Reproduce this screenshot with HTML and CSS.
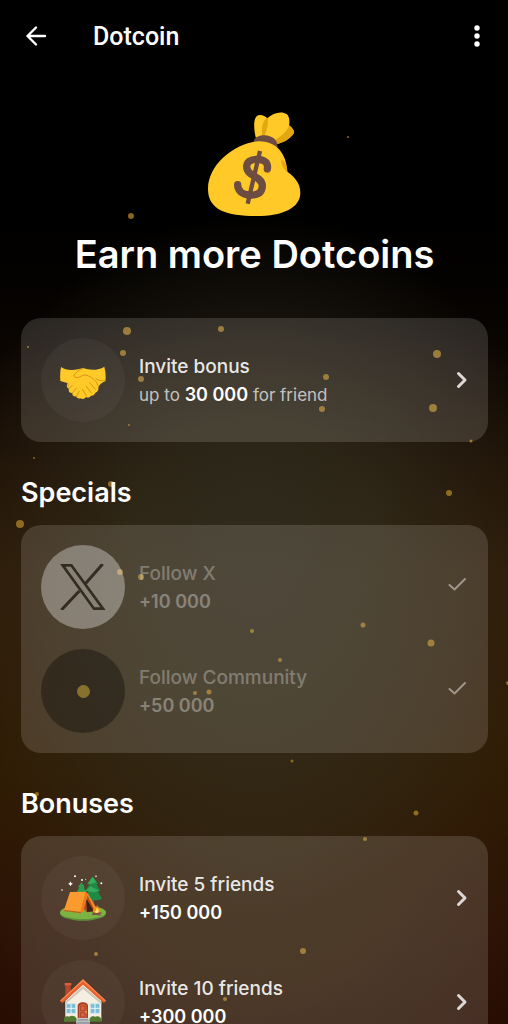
FILE: index.html
```html
<!DOCTYPE html>
<html lang="en">
<head>
    <meta charset="UTF-8">
    <meta name="viewport" content="width=device-width, initial-scale=1.0">
    <title>Dotcoin</title>
    <link rel="stylesheet" href="styles.css">
</head>
<body>
    <svg class="particles" viewBox="0 0 508 1024" preserveAspectRatio="xMidYMin slice" aria-hidden="true">
        <circle cx="348" cy="137" r="1"/>
        <circle cx="131" cy="216" r="3"/>
        <circle cx="127" cy="331" r="4"/>
        <circle cx="221" cy="329" r="3"/>
        <circle cx="28" cy="347" r="1"/>
        <circle cx="123" cy="353" r="3"/>
        <circle cx="141" cy="379" r="3"/>
        <circle cx="437" cy="354" r="4"/>
        <circle cx="326" cy="377" r="3"/>
        <circle cx="322" cy="409" r="3"/>
        <circle cx="433" cy="408" r="4"/>
        <circle cx="129" cy="425" r="1"/>
        <circle cx="471" cy="441" r="1.5"/>
        <circle cx="34" cy="458" r="1"/>
        <circle cx="111" cy="484" r="3"/>
        <circle cx="449" cy="493" r="3"/>
        <circle cx="20" cy="524" r="4"/>
        <circle cx="120" cy="572" r="3"/>
        <circle cx="141" cy="577" r="3"/>
        <circle cx="252" cy="631" r="2"/>
        <circle cx="363" cy="625" r="2.5"/>
        <circle cx="431" cy="643" r="3.5"/>
        <circle cx="280" cy="660" r="2"/>
        <circle cx="195" cy="693" r="2"/>
        <circle cx="209" cy="692" r="2.5"/>
        <circle cx="508" cy="683" r="2"/>
        <circle cx="292" cy="761" r="1.5"/>
        <circle cx="37" cy="794" r="2"/>
        <circle cx="416" cy="813" r="2.5"/>
        <circle cx="365" cy="839" r="2"/>
        <circle cx="303" cy="951" r="3"/>
        <circle cx="96" cy="954" r="2"/>
        <circle cx="225" cy="999" r="2"/>
    </svg>

    <header class="topbar">
        <button class="icon-btn" type="button" aria-label="Back">
            <svg width="24" height="24" viewBox="0 0 24 24" fill="none" stroke="#fff" stroke-width="2.4" stroke-linecap="round" stroke-linejoin="round"><path d="M21 12H3.500M12 3.500L3.500 12L12 20.500"/></svg>
        </button>
        <span class="topbar-title">Dotcoin</span>
        <button class="icon-btn" type="button" aria-label="Menu">
            <svg width="24" height="24" viewBox="0 0 24 24" fill="#fff"><circle cx="12" cy="4" r="2.700"/><circle cx="12" cy="12" r="2.700"/><circle cx="12" cy="20" r="2.700"/></svg>
        </button>
    </header>

    <main>
        <section class="hero">
            <svg class="money-bag" viewBox="54 36 279 312" aria-hidden="true">
                <path fill="#ffca28" d="M197 112C190 80 189 45 210 45C220 45 226 50 232 55C248 38 275 32 290 42C300 50 299 68 297 78C306 83 312 90 312 98C300 118 275 130 256 132Z"/>
                <path fill="#e2a610" d="M298 76C291 96 270 112 254 120L260 132C280 128 303 116 312 98C312 90 306 82 298 76Z"/>
                <path fill="#e2a610" d="M233 54C220 56 213 82 217 110L223 110C228 96 236 76 233 54Z"/>
                <path fill="#6d4c41" d="M190 126C193 108 220 101 243 110C258 116 265 130 262 144L240 138Z"/>
                <path fill="#ffca28" d="M206 124C140 128 54 190 54 267C54 330 110 348 198 348C282 348 331 322 331 278C331 247 311 229 292 215C290 178 272 124 206 124Z"/>
                <path fill="#e2a610" d="M292 216C281 207 272 192 274 179C285 182 290 196 292 216Z"/>
                <g fill="none" stroke="#6d4c41">
                    <path stroke-width="22" stroke-linecap="round" d="M232 207C235 188 224 179 203 178C182 177 171 186 170 198C169 232 217 226 217 258C217 279 200 287 177 285C156 283 143 271 143 254"/>
                    <path stroke-width="13" d="M210 153L173 311"/>
                </g>
            </svg>
            <h1>Earn more Dotcoins</h1>
        </section>

        <section class="card">
            <button class="task" type="button">
                <span class="avatar">
                    <svg viewBox="90 81 138 138" aria-hidden="true">
                        <path fill="#ffca28" d="M93 111C105 121 126 121 144 118L160 114C178 121 205 122 223 110Q229 132 226 154C216 157 210 163 205 171C207 181 201 187 196 188C194 195 188 198 183 197C179 203 173 204 168 201C164 207 158 208 151 205C145 207 139 204 139 199C132 201 126 196 127 189C119 190 114 182 117 176C109 173 109 163 113 159C104 158 98 154 91 153Q89 130 93 111Z"/>
                        <g fill="none" stroke="#d49317" stroke-width="3" stroke-linecap="round" stroke-linejoin="round">
                            <path d="M160 115C148 119 137 127 131 138C139 147 151 141 160 135C174 134 188 143 198 155L206 170"/>
                            <path d="M198 146C206 153 215 153 225 152"/>
                            <path d="M179 158L196 178M169 169L184 189M157 178L169 197"/>
                            <path d="M117 176L127 166M127 189L139 174M139 199L148 184"/>
                            <path d="M113 159C116 163 112 169 117 171"/>
                        </g>
                    </svg>
                </span>
                <span class="task-text">
                    <span class="task-title">Invite bonus</span>
                    <span class="task-note">up to <b>30 000</b> for friend</span>
                </span>
                <svg class="chevron" viewBox="0 0 12 20" aria-hidden="true"><path d="M2.500 3.500L9 10L2.500 16.500"/></svg>
            </button>
        </section>

        <h2>Specials</h2>
        <section class="card">
            <button class="task done" type="button" disabled>
                <span class="avatar avatar-x">
                    <svg viewBox="90 88 138 138" aria-hidden="true">
                        <path fill="none" stroke="#000" stroke-width="8" d="M98 92H124L219 222H192Z"/>
                        <path fill="none" stroke="#000" stroke-width="9" d="M218 88L166 147M148 169L94 226"/>
                    </svg>
                </span>
                <span class="task-text">
                    <span class="task-title">Follow X</span>
                    <b class="task-reward">+10 000</b>
                </span>
                <svg class="check" viewBox="0 0 20 20" aria-hidden="true"><path d="M1.500 8L6.500 12.500L17 2"/></svg>
            </button>
            <button class="task done" type="button" disabled>
                <span class="avatar avatar-dot"></span>
                <span class="task-text">
                    <span class="task-title">Follow Community</span>
                    <b class="task-reward">+50 000</b>
                </span>
                <svg class="check" viewBox="0 0 20 20" aria-hidden="true"><path d="M1.500 8L6.500 12.500L17 2"/></svg>
            </button>
        </section>

        <h2>Bonuses</h2>
        <section class="card">
            <button class="task" type="button">
                <span class="avatar">
                    <!-- camping tent -->
                    <svg viewBox="90 76 138 138" aria-hidden="true">
                        <ellipse cx="159" cy="192" rx="69" ry="21" fill="#5d8f3a"/>
                        <ellipse cx="159" cy="188" rx="69" ry="20" fill="#7cb342"/>
                        <path fill="#795548" d="M185 150H192V178H185Z"/>
                        <path fill="#2e9b4f" d="M154 98L165 112L161 113L170 127H140L148 113L144 112Z"/>
                        <path fill="#1f8a43" d="M188 81L205 103L199 104L211 123L204 125L216 148C205 153 180 153 166 148L174 125L167 123L178 104L172 102Z"/>
                        <path fill="#36ab5a" d="M188 81L199 98L184 103L172 102ZM181 110L208 123L190 128L167 123Z"/>
                        <path fill="#bf4b16" d="M163 127L202 183L171 188L161 178Z"/>
                        <path fill="#37251f" d="M168 145L192 185L171 187Z"/>
                        <path fill="#fb9a2e" d="M120 127L168 126L152 187L102 181Z"/>
                        <path fill="#ef7d20" d="M168 126L174 136L158 187L151 187Z"/>
                        <path fill="#f58a2a" d="M168 126L175 134L203 181L194 184Z"/>
                        <path fill="#c85a17" d="M102 181L152 187L154 191L102 184Z"/>
                        <path fill="#ff8f00" d="M201 165C204 174 212 176 211 186C208 195 192 195 189 186C188 178 194 178 194 172L198 178Z"/>
                        <path fill="#ffe57f" d="M201 173C202 180 208 181 206 187C202 192 194 190 194 184L198 183Z"/>
                        <path stroke="#795548" stroke-width="4" stroke-linecap="round" d="M188 194L213 190M189 190L210 196"/>
                        <g fill="#fff">
                            <path d="M121 95L124 100L129 102L124 105L121 110L119 105L114 102L119 100Z"/>
                            <circle cx="96" cy="121" r="2.500"/>
                            <circle cx="135" cy="80" r="3"/>
                            <circle cx="156" cy="91" r="3"/>
                            <circle cx="167" cy="89" r="1.500"/>
                            <circle cx="198" cy="80" r="2.500"/>
                            <circle cx="214" cy="101" r="3"/>
                        </g>
                    </svg>
                </span>
                <span class="task-text">
                    <span class="task-title">Invite 5 friends</span>
                    <b class="task-reward">+150 000</b>
                </span>
                <svg class="chevron" viewBox="0 0 12 20" aria-hidden="true"><path d="M2.500 3.500L9 10L2.500 16.500"/></svg>
            </button>
            <button class="task" type="button">
                <span class="avatar">
                    <!-- house -->
                    <svg viewBox="90 387 138 138" aria-hidden="true">
                        <path fill="#b6472a" d="M106 401H122V430L106 442Z"/>
                        <path fill="#d8603a" d="M104 399H124V406H104Z"/>
                        <path fill="#f5efe2" d="M159 402L214 452V512H106V452Z"/>
                        <path fill="#cfc4b2" d="M159 408L214 455V462L159 417L106 462V455Z"/>
                        <path fill="#e9602e" d="M159 388L228 452L222 459L159 404L97 459L90 452Z"/>
                        <path fill="#f98a4b" d="M159 388L228 452L225 454L159 394L93 454L90 452Z"/>
                        <g fill="#79bfd6" stroke="#dcecef" stroke-width="2">
                            <path d="M109 461H137V490H109Z"/>
                            <path d="M181 461H209V490H181Z"/>
                        </g>
                        <path stroke="#eef5f5" stroke-width="3" d="M123 461V490M109 475H137M195 461V490M181 475H209"/>
                        <path fill="#a83c24" d="M143 506V468C143 453 174 453 174 468V506Z"/>
                        <path fill="#d9643e" d="M147 504V470C147 459 170 459 170 470V504Z"/>
                        <path fill="none" stroke="#8d3b25" stroke-width="2" d="M152 482V468H165V482ZM152 501V488H165V501Z"/>
                        <circle cx="168" cy="486" r="2.500" fill="#ffca28"/>
                        <path fill="#547c30" d="M102 515C100 502 108 496 117 500C125 494 138 498 140 507V515ZM178 515C177 502 185 496 195 500C205 495 216 502 215 515Z"/>
                        <path fill="#9b9ea5" d="M143 504H175V512H180V525H138V512H143Z"/>
                        <path fill="#c3c6cc" d="M143 504H175V507H143ZM138 512H180V515H138Z"/>
                    </svg>
                </span>
                <span class="task-text">
                    <span class="task-title">Invite 10 friends</span>
                    <b class="task-reward">+300 000</b>
                </span>
                <svg class="chevron" viewBox="0 0 12 20" aria-hidden="true"><path d="M2.500 3.500L9 10L2.500 16.500"/></svg>
            </button>
        </section>
    </main>
</body>
</html>
```
FILE: styles.css
```css
* {
    box-sizing: border-box;
}

body {
    font-family: Inter, "Liberation Sans", sans-serif;
    margin: 0;
    height: 100vh;
    display: flex;
    flex-direction: column;
    overflow: hidden;
    position: relative;
    color: #fff;
    background:
        radial-gradient(ellipse 62% 34% at 50% 55%, rgba(50, 48, 36, 0.8), rgba(50, 46, 30, 0.7) 40%, rgba(50, 38, 16, 0)),
        radial-gradient(ellipse 60% 30% at 50% 82%, rgba(50, 36, 14, 0.8), rgba(50, 34, 12, 0.6) 50%, rgba(50, 30, 6, 0)),
        linear-gradient(#000 20%, #060301 31%, #1e1005 45%, #2e1a06 56%, #2f1b03 76%, #2c1103 88%, #280d03);
}

button {
    padding: 0;
    border: none;
    background: none;
    color: inherit;
    font-family: inherit;
    cursor: pointer;
}

svg {
    display: block;
}

.particles {
    position: absolute;
    top: 0;
    left: 0;
    width: 100%;
    height: 100%;
    z-index: -1;
    fill: #a87f26;
    opacity: 0.8;
}

.topbar {
    display: flex;
    align-items: center;
    flex-shrink: 0;
    height: 72px;
    padding: 0 19px 0 24px;
}

.icon-btn {
    width: 24px;
    height: 24px;
}

.topbar-title {
    flex: 1;
    padding-left: 45px;
    font-family: Roboto, sans-serif;
    font-size: 25px;
    font-weight: 500;
}

main {
    flex: 1;
    min-height: 0;
    padding: 0 20px 0 21px;
    overflow-y: auto;
    scrollbar-width: none;
}

.hero {
    display: flex;
    flex-direction: column;
    align-items: center;
    padding-top: 40px;
}

.money-bag {
    width: 93px;
    height: 104px;
}

h1 {
    margin: 14px 0 40px;
    font-size: 38px;
    line-height: 48px;
    font-weight: 600;
    text-align: center;
}

h2 {
    margin: 35px 0 16px;
    font-size: 27px;
    line-height: 32px;
    font-weight: 600;
}

.card {
    display: flex;
    flex-direction: column;
    gap: 20px;
    padding: 20px;
    border-radius: 20px;
    background: rgba(255, 245, 240, 0.14);
}

.task {
    display: flex;
    align-items: center;
    gap: 14px;
    width: 100%;
    text-align: left;
}

.avatar {
    display: flex;
    align-items: center;
    justify-content: center;
    flex-shrink: 0;
    width: 84px;
    height: 84px;
    border-radius: 50%;
    background: rgba(255, 255, 255, 0.04);
}

.avatar svg {
    width: 46px;
    height: 46px;
}

.avatar-x {
    background: #fff;
}

.avatar-dot {
    background: #000;
}

.avatar-dot::before {
    content: "";
    width: 13px;
    height: 13px;
    border-radius: 50%;
    background: #ffd22e;
}

.task-text {
    flex: 1;
    display: flex;
    flex-direction: column;
    padding-top: 2px;
    font-size: 18px;
    line-height: 28px;
}

.task-title {
    font-size: 19px;
    font-weight: 500;
    color: rgba(255, 255, 255, 0.9);
}

.task-note {
    font-size: 17px;
    color: rgba(255, 255, 255, 0.7);
}

.task-note b {
    color: #fff;
}

b {
    font-size: 18px;
    font-weight: 600;
}

.done .avatar,
.done .task-text {
    opacity: 0.33;
}

.done .check {
    opacity: 0.45;
}

.chevron {
    width: 12px;
    height: 20px;
    fill: none;
    stroke: #ddd8d6;
    stroke-width: 3;
    stroke-linecap: round;
    stroke-linejoin: round;
}

.check {
    width: 20px;
    height: 20px;
    fill: none;
    stroke: #fff;
    stroke-width: 2;
    stroke-linecap: round;
    stroke-linejoin: round;
}
```
